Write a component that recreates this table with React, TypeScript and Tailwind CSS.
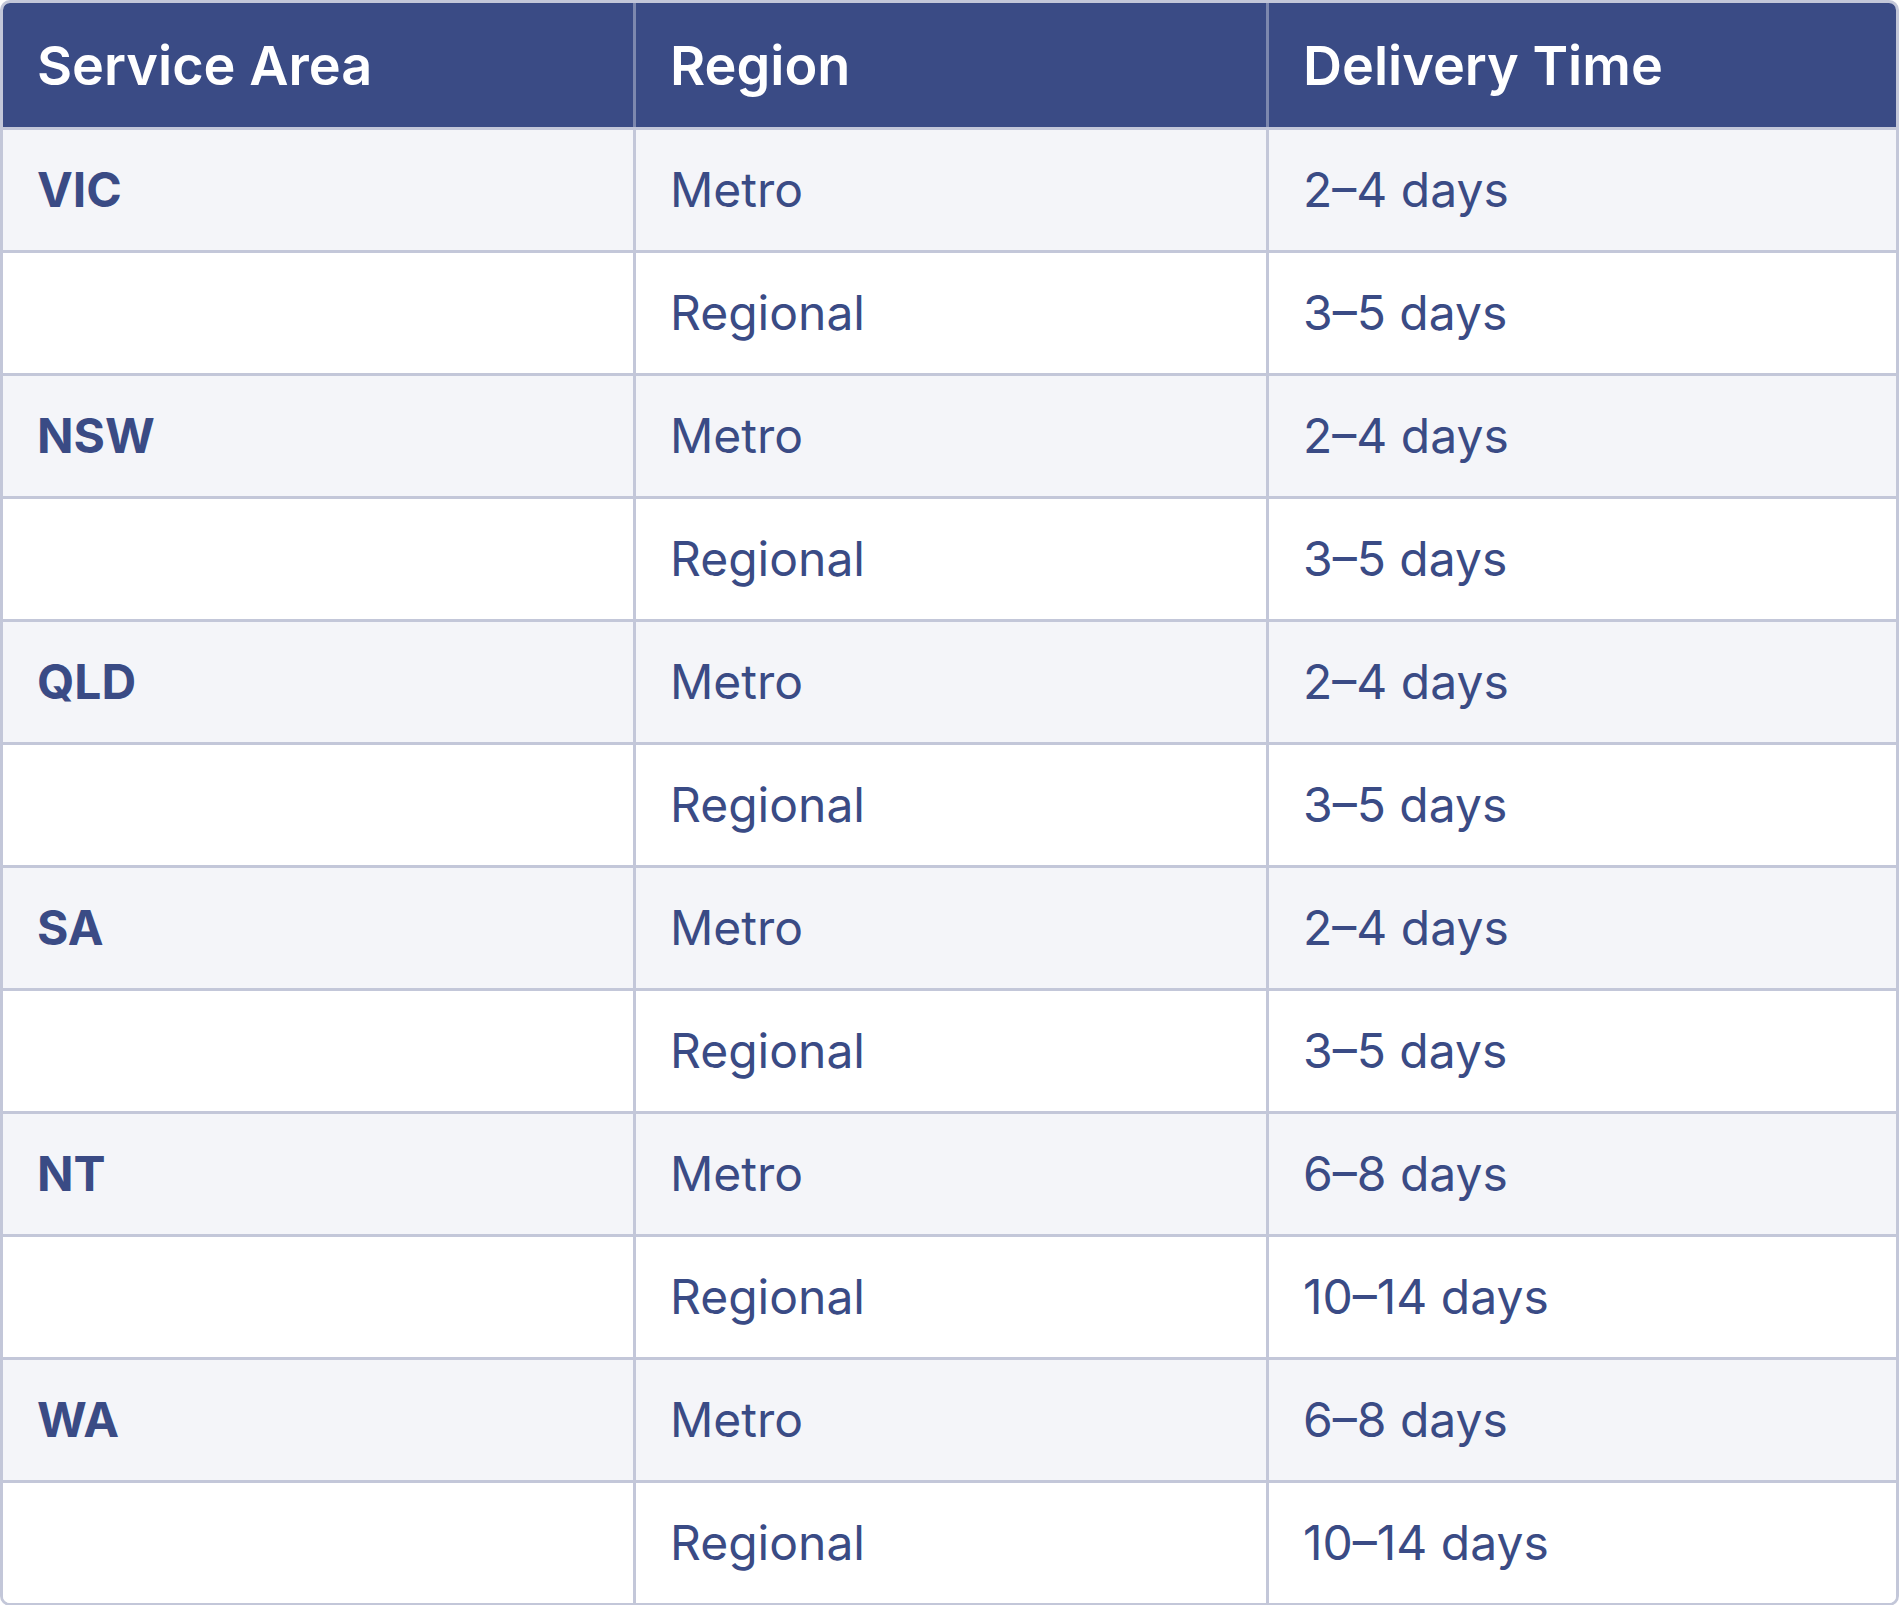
const rows = [
  { area: "VIC", region: "Metro", time: "2–4 days" },
  { area: "", region: "Regional", time: "3–5 days" },
  { area: "NSW", region: "Metro", time: "2–4 days" },
  { area: "", region: "Regional", time: "3–5 days" },
  { area: "QLD", region: "Metro", time: "2–4 days" },
  { area: "", region: "Regional", time: "3–5 days" },
  { area: "SA", region: "Metro", time: "2–4 days" },
  { area: "", region: "Regional", time: "3–5 days" },
  { area: "NT", region: "Metro", time: "6–8 days" },
  { area: "", region: "Regional", time: "10–14 days" },
  { area: "WA", region: "Metro", time: "6–8 days" },
  { area: "", region: "Regional", time: "10–14 days" },
];

export default function App() {
  return (
    <div className="w-[1899px] bg-white font-['Inter','Liberation_Sans',sans-serif] text-[48px] text-[#3a4b85]">
      <div className="overflow-hidden rounded-[10px] border-[3px] border-[#c3c7d9]">
        {/* header */}
        <div className="grid h-[127px] grid-cols-[633px_633px_1fr] border-b-[3px] border-[#c3c7d9] bg-[#3a4b85] text-[54px] font-semibold text-white">
          <div className="flex items-center border-r-[3px] border-[#7d88ae] px-[34px]">Service Area</div>
          <div className="flex items-center border-r-[3px] border-[#7d88ae] px-[34px]">Region</div>
          <div className="flex items-center px-[34px]">Delivery Time</div>
        </div>
        {rows.map((r, i) => (
          <div
            key={i}
            className={`grid grid-cols-[633px_633px_1fr] ${i % 2 === 0 ? "bg-[#f4f5f9]" : "bg-white"} ${
              i < rows.length - 1 ? "h-[123px] border-b-[3px] border-[#c3c7d9]" : "h-[120px]"
            }`}
          >
            <div className="flex items-center border-r-[3px] border-[#c3c7d9] px-[34px] font-bold">{r.area}</div>
            <div className="flex items-center border-r-[3px] border-[#c3c7d9] px-[34px]">{r.region}</div>
            <div className="flex items-center px-[34px]">{r.time}</div>
          </div>
        ))}
      </div>
    </div>
  );
}
